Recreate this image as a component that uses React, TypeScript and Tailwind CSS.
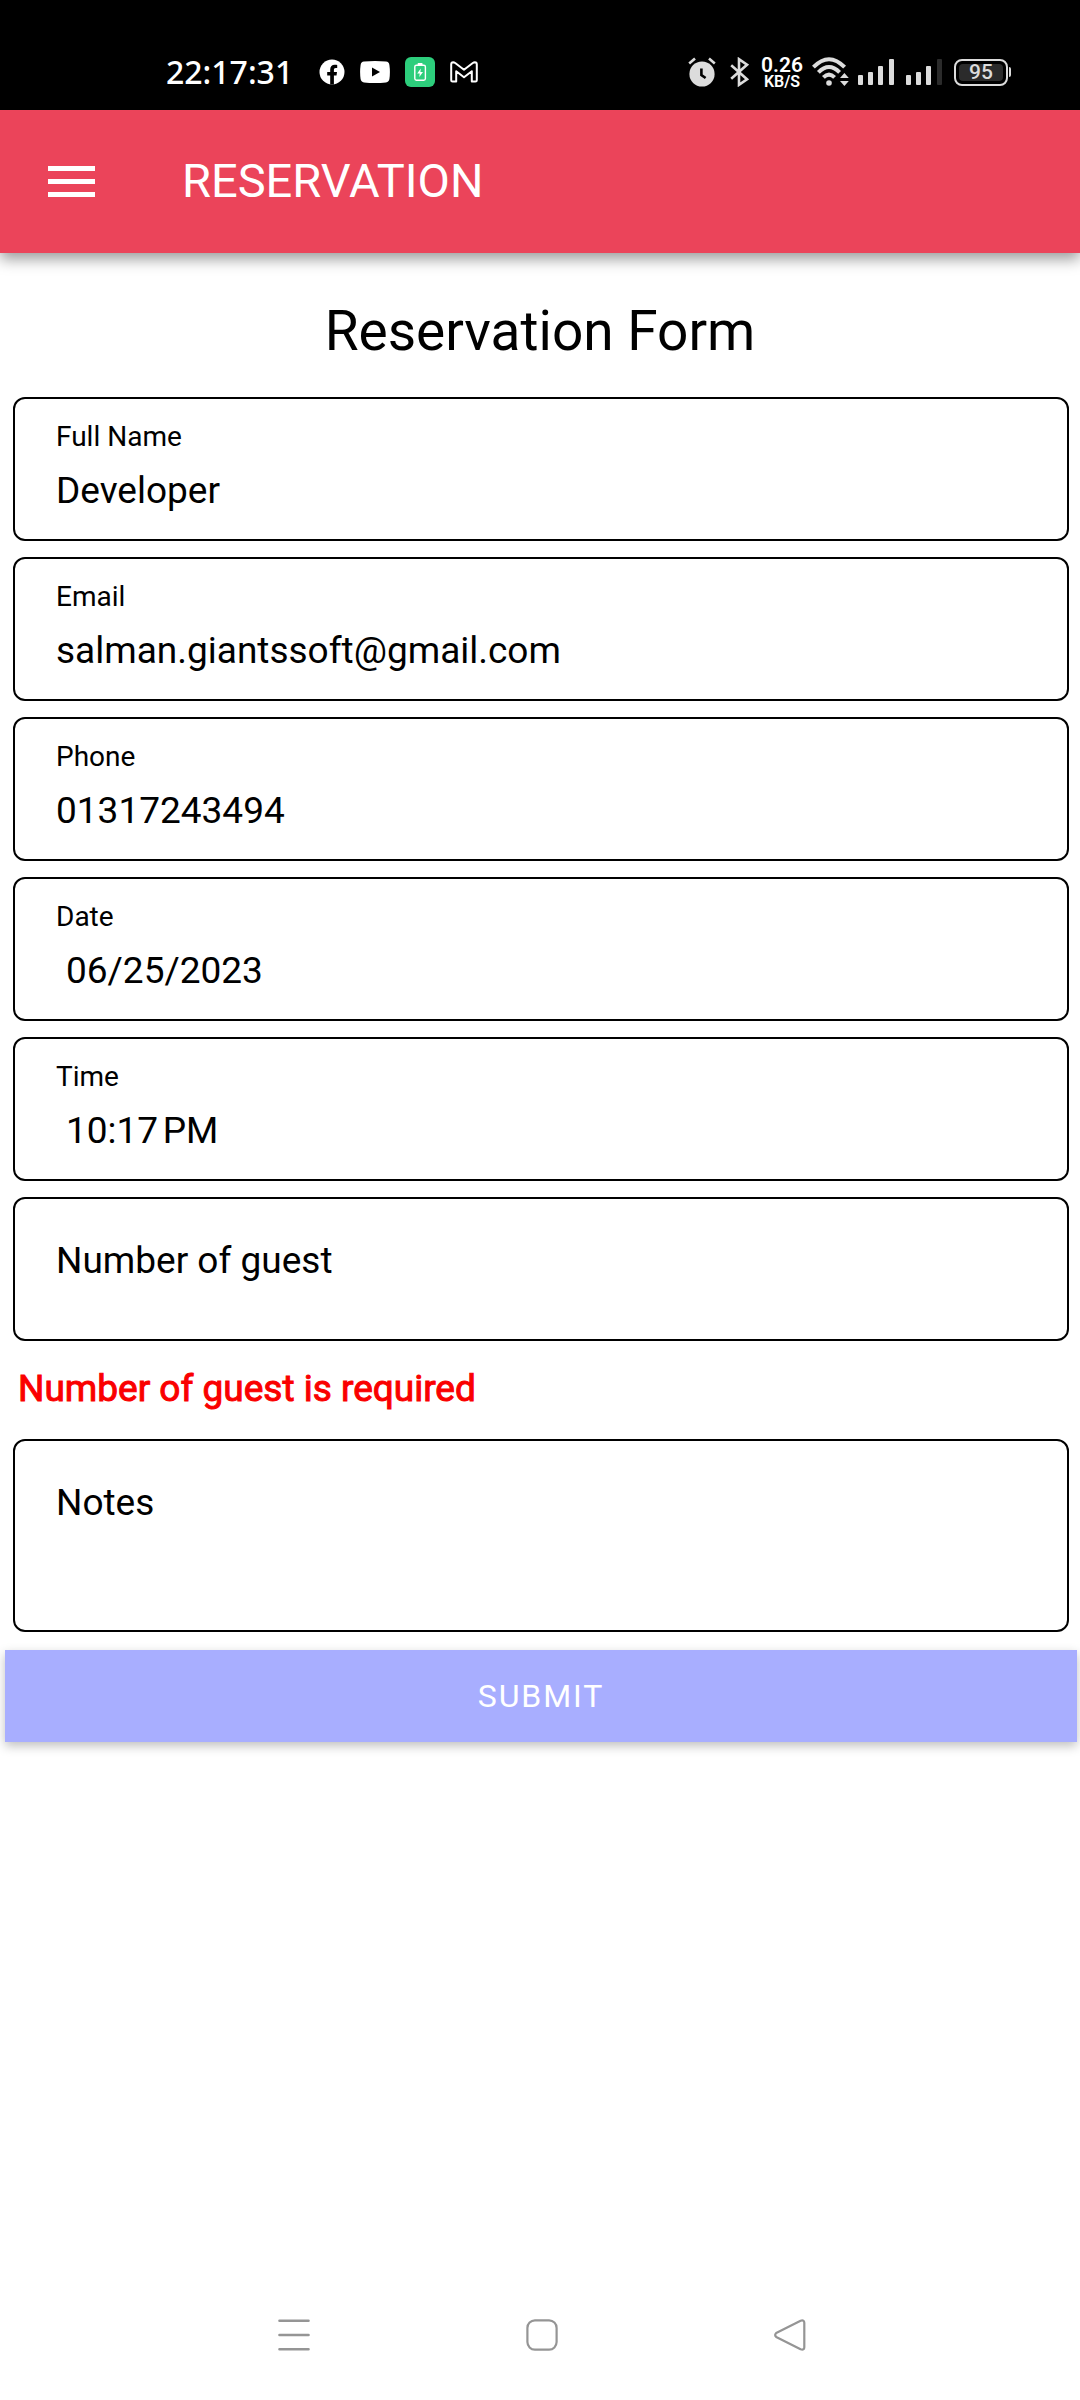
import { useState } from "react";

function FacebookIcon() {
  return (
    <svg width="26" height="26" viewBox="0 0 26 26" aria-hidden="true">
      <circle cx="13" cy="13" r="12.5" fill="#fff" />
      <path d="M11.2 25.6V16.6H8.2V13H11.2V10.6C11.2 7.4 13 5.8 15.7 5.8C16.9 5.8 18.2 6 18.2 6V9H16.8C15.3 9 14.9 9.9 14.9 10.8V13H18L17.5 16.6H14.9V25.6Z" fill="#000" />
    </svg>
  );
}

function YoutubeIcon() {
  return (
    <svg width="30" height="22" viewBox="0 0 30 22" aria-hidden="true">
      <path d="M4 .6Q15 -.4 26 .6Q29 1 29.4 4Q30.4 11 29.4 18Q29 21 26 21.4Q15 22.4 4 21.4Q1 21 .6 18Q-.4 11 .6 4Q1 1 4 .6Z" fill="#fff" />
      <path d="M12 6.5L20 11L12 15.5Z" fill="#000" />
    </svg>
  );
}

function ChargeIcon() {
  return (
    <svg width="30" height="30" viewBox="0 0 30 30" aria-hidden="true">
      <rect width="30" height="30" rx="6" fill="#2dce7c" />
      <rect x="9.8" y="8.2" width="10.6" height="15" rx="1.6" fill="none" stroke="#fff" strokeWidth="1.4" />
      <rect x="12.6" y="6" width="5" height="2.4" rx=".8" fill="#fff" />
      <path d="M15.8 11.5L12.2 16.4H14.7L14.3 20L18 15H15.4Z" fill="#fff" />
    </svg>
  );
}

function GmailIcon() {
  return (
    <svg width="28" height="22" viewBox="0 0 28 22" aria-hidden="true">
      <path
        d="M1.2 3.4V19.2Q1.2 20.6 2.6 20.6H6.2V10.2L14 16.2L21.8 10.2V20.6H25.4Q26.8 20.6 26.8 19.2V3.4Q26.8 1.4 24.8 1.3Q23.8 1.3 22.8 2L14 8.8L5.2 2Q4.2 1.3 3.2 1.3Q1.2 1.4 1.2 3.4Z"
        fill="none"
        stroke="#fff"
        strokeWidth="2"
        strokeLinejoin="round"
      />
    </svg>
  );
}

function AlarmIcon() {
  return (
    <svg width="28" height="30" viewBox="0 0 28 30" aria-hidden="true">
      <circle cx="14" cy="17" r="12.6" fill="#dcdcdc" />
      <path d="M1.2 6.6L7 1.6M26.8 6.6L21 1.6" stroke="#dcdcdc" strokeWidth="2.6" />
      <path d="M13.4 11.5V18L17.6 21" stroke="#000" strokeWidth="2.6" fill="none" />
    </svg>
  );
}

function BluetoothIcon() {
  return (
    <svg width="19" height="30" viewBox="0 0 19 30" aria-hidden="true">
      <path d="M1.2 8.2L17 22.2L9 27.8V2.2L17 7.8L1.2 21.8" fill="none" stroke="#dcdcdc" strokeWidth="2.6" strokeLinejoin="miter" />
    </svg>
  );
}

function WifiIcon() {
  return (
    <svg width="37" height="30" viewBox="0 0 37 30" aria-hidden="true">
      <g fill="none" stroke="#dcdcdc" strokeWidth="4">
        <path d="M1.4 10.2Q17 -5.8 32.6 10.2" />
        <path d="M6.4 15.4Q17 4.6 27.6 15.4" />
        <path d="M11.4 20.4Q17 14.8 22.6 20.4" />
      </g>
      <circle cx="17" cy="26" r="2.8" fill="#dcdcdc" />
      <path d="M28 21L32.4 16L36.8 21ZM28 24L32.4 29L36.8 24Z" fill="#dcdcdc" />
    </svg>
  );
}

function SignalIcon({ last }: { last: string }) {
  return (
    <svg width="36" height="28" viewBox="0 0 36 28" aria-hidden="true">
      <rect x="0" y="17" width="5" height="10" rx="1" fill="#dcdcdc" />
      <rect x="10" y="14" width="5" height="13" rx="1" fill="#dcdcdc" />
      <rect x="20" y="8" width="5" height="19" rx="1" fill="#dcdcdc" />
      <rect x="31" y="1" width="5" height="26" rx="1" fill={last} />
    </svg>
  );
}

function Battery() {
  return (
    <span className="flex items-center gap-px">
      <span className="flex h-[27px] w-[54px] rounded-lg border-2 border-[#dcdcdc] p-[3px]">
        <span className="flex flex-1 items-center justify-center rounded-sm bg-[#2b2b2b] text-[21px] leading-none font-medium text-[#dcdcdc]">
          95
        </span>
      </span>
      <span className="h-2.5 w-0.5 rounded-r-sm bg-[#dcdcdc]" />
    </span>
  );
}

function StatusBar() {
  return (
    <div className="flex h-[110px] items-center justify-between bg-black pt-[34px] pr-[69px] pl-[166px] text-white">
      <div className="flex items-center">
        <span className="w-[153px] font-['Noto_Sans',sans-serif] text-[32px] leading-none font-medium">22:17:31</span>
        <div className="flex items-center gap-[15px]">
          <FacebookIcon />
          <YoutubeIcon />
          <ChargeIcon />
          <GmailIcon />
        </div>
      </div>
      <div className="flex items-center gap-3">
        <div className="flex items-center gap-3.5">
          <AlarmIcon />
          <BluetoothIcon />
        </div>
        <div className="flex items-center gap-[9px]">
          <div className="flex flex-col items-center font-semibold">
            <span className="text-[21px] leading-[20px]">0.26</span>
            <span className="text-[16px] leading-[14px]">KB/S</span>
          </div>
          <WifiIcon />
          <SignalIcon last="#dcdcdc" />
        </div>
        <SignalIcon last="#2b2b2b" />
        <Battery />
      </div>
    </div>
  );
}

const boxClass = "flex flex-col rounded-xl border-2 border-black px-[41px]";
const inputClass = "w-full bg-transparent p-0 text-[37px] leading-[44px] text-black outline-none";

function Field({ id, label, value, type = "text", indent = false }: { id: string; label: string; value: string; type?: string; indent?: boolean }) {
  const [text, setText] = useState(value);
  return (
    <div className={`${boxClass} gap-4 pt-[22px] pb-[26px]`}>
      <label htmlFor={id} className="text-[28px] leading-8">
        {label}
      </label>
      <input
        id={id}
        type={type}
        value={text}
        onChange={(e) => setText(e.target.value)}
        className={`${inputClass} h-11 ${indent ? "pl-2.5" : ""}`}
      />
    </div>
  );
}

export default function App() {
  return (
    <div className="flex min-h-screen flex-col bg-white font-[Roboto,sans-serif] text-black">
      <StatusBar />
      <header className="flex h-[143px] items-center gap-[87px] bg-[#eb445a] pl-12 text-white shadow-[0_6px_14px_rgba(0,0,0,0.4)]">
        <button type="button" aria-label="Menu" className="flex w-[47px] flex-col gap-2">
          <span className="h-[5px] bg-white" />
          <span className="h-[5px] bg-white" />
          <span className="h-[5px] bg-white" />
        </button>
        <h1 className="pb-0.5 text-[47px] leading-[56px]">RESERVATION</h1>
      </header>

      <main>
        <h2 className="pt-[46px] pb-[34px] text-center text-[55px] leading-[64px]">Reservation Form</h2>
        <form onSubmit={(e) => e.preventDefault()}>
          <div className="mr-[11px] ml-[13px] flex flex-col gap-4">
            <Field id="name" label="Full Name" value="Developer" />
            <Field id="email" label="Email" type="email" value="salman.giantssoft@gmail.com" />
            <Field id="phone" label="Phone" type="tel" value="01317243494" />
            <Field id="date" label="Date" value="06/25/2023" indent />
            <Field id="time" label="Time" value={"10:17\u202fPM"} indent />
            <div className={`${boxClass} pt-10`}>
              <label htmlFor="guests" className="text-[37px] leading-[44px]">
                Number of guest
              </label>
              <input id="guests" inputMode="numeric" aria-describedby="guests-error" className={`${inputClass} h-14`} />
            </div>
          </div>
          <p id="guests-error" className="pt-[26px] pb-7 pl-[18px] text-[37px] leading-[44px] text-[#fa0000] [-webkit-text-stroke:1px_#fa0000]">
            Number of guest is required
          </p>
          <div className="mr-[11px] ml-[13px]">
            <div className={`${boxClass} pt-10`}>
              <label htmlFor="notes" className="text-[37px] leading-[44px]">
                Notes
              </label>
              <textarea id="notes" className={`${inputClass} h-[105px] resize-none`} />
            </div>
          </div>
          <div className="mt-[18px] mr-[3px] ml-[5px]">
            <button type="submit" className="h-[92px] w-full bg-[#a8aeff] text-[32px] leading-10 tracking-[0.06em] text-white shadow-[0_4px_10px_rgba(0,0,0,0.25)]">
              SUBMIT
            </button>
          </div>
        </form>
      </main>

      <nav className="mt-auto flex justify-center gap-[216px] pb-[49px] pl-1">
        <button type="button" aria-label="Recent apps">
          <svg width="32" height="32" viewBox="0 0 32 32" fill="none" stroke="#959595" strokeWidth="2.6" strokeLinecap="round">
            <path d="M1.5 1.8H30.5M1.5 16H30.5M1.5 30.2H30.5" />
          </svg>
        </button>
        <button type="button" aria-label="Home">
          <svg width="32" height="32" viewBox="0 0 32 32" fill="none" stroke="#959595" strokeWidth="2.2">
            <rect x="1.4" y="1.4" width="29.2" height="29.2" rx="7.5" />
          </svg>
        </button>
        <button type="button" aria-label="Back">
          <svg width="32" height="32" viewBox="0 0 32 32" fill="none" stroke="#959595" strokeWidth="2.2" strokeLinejoin="round">
            <path d="M2.2 14L26.6 1.7Q30.3 .6 30.3 3.8V28.2Q30.3 31.4 26.6 30.3L2.2 18Q.2 16 2.2 14Z" />
          </svg>
        </button>
      </nav>
    </div>
  );
}
